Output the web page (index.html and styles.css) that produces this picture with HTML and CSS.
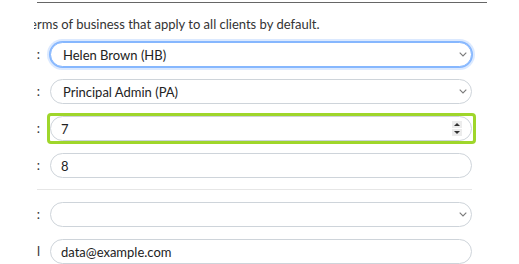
FILE: index.html
```html
<!DOCTYPE html>
<html lang="en">
<head>
  <meta charset="UTF-8" />
  <meta name="viewport" content="width=device-width, initial-scale=1.0" />
  <title>Client defaults</title>
  <link rel="stylesheet" href="styles.css">
</head>
<body>

  <div class="clip">
    <div class="sheet">
      <hr class="rule" />
      <p class="intro">Terms of business that apply to all clients by default.</p>

      <div class="form">
        <label class="lbl" for="partner"><span>Responsible partner:</span></label>
        <div class="control">
          <select id="partner" class="field select is-focused">
            <option>Helen Brown (HB)</option>
          </select>
          <svg class="chevron" width="8" height="5" viewBox="0 0 8 5"><polyline points="0.7,0.7 4,4 7.3,0.7" /></svg>
        </div>

        <label class="lbl" for="admin"><span>Billing admin:</span></label>
        <div class="control">
          <select id="admin" class="field select">
            <option>Principal Admin (PA)</option>
          </select>
          <svg class="chevron" width="8" height="5" viewBox="0 0 8 5"><polyline points="0.7,0.7 4,4 7.3,0.7" /></svg>
        </div>

        <label class="lbl" for="terms"><span>Payment terms (days):</span></label>
        <div class="control is-changed">
          <input id="terms" class="field" type="text" value="7" />
          <span class="spin">
            <span class="spin-up"></span>
            <span class="spin-down"></span>
          </span>
        </div>

        <label class="lbl" for="reminder"><span>Reminder after (days):</span></label>
        <div class="control">
          <input id="reminder" class="field" type="text" value="8" />
        </div>

        <hr class="divider" />

        <label class="lbl" for="currency"><span>Default currency:</span></label>
        <div class="control">
          <select id="currency" class="field select">
            <option></option>
          </select>
          <svg class="chevron" width="8" height="5" viewBox="0 0 8 5"><polyline points="0.7,0.7 4,4 7.3,0.7" /></svg>
        </div>

        <label class="lbl" for="dpemail"><span>Data protection email<br />address:</span></label>
        <div class="control">
          <input id="dpemail" class="field" type="text" value="data@example.com" />
        </div>
      </div>
    </div>
  </div>

</body>
</html>
```

FILE: styles.css
```css
body {
  margin: 0;
  background: #fff;
  font-family: Lato, "Open Sans", sans-serif;
  font-size: 13px;
  color: #333;
  overflow: hidden;
}

.clip {
  margin-left: 34px;
  width: 453px;
  height: 264px;
  overflow: hidden;
}

.rule {
  margin: 2px 0 0 3px;
  border: none;
  border-top: 1px solid #666;
}

.intro {
  margin: 13px 0 0 -10px;
  line-height: 17px;
  white-space: nowrap;
}

.form {
  display: grid;
  grid-template-columns: 3px 1fr;
  column-gap: 10px;
  row-gap: 12px;
  margin-top: 9px;
  padding: 0 15px 0 3px;
}

/* labels are cut at the left, only their tail shows */
.lbl {
  display: flex;
  justify-content: flex-end;
  overflow: hidden;
  line-height: 17px;
  padding-top: 4px;
  color: #333;
}

.lbl span {
  flex: none;
  white-space: nowrap;
  text-align: right;
}

.control {
  position: relative;
}

.field {
  display: block;
  box-sizing: border-box;
  width: 100%;
  height: 25px;
  margin: 0;
  padding: 0 24px 0 10px;
  border: 1px solid #ced4da;
  border-radius: 13px;
  background: #fff;
  font-family: inherit;
  font-size: 13px;
  color: #222;
  outline: none;
}

.select {
  appearance: none;
  -webkit-appearance: none;
  padding-left: 12px;
}

.is-focused {
  border-color: #86b7fe;
  box-shadow: 0 0 0 1px #86b7fe, 0 0 0 3px rgba(13, 110, 253, 0.15);
}

.chevron {
  position: absolute;
  right: 5px;
  top: 10px;
  fill: none;
  stroke: #7a7a7a;
  stroke-width: 1.1;
}

.is-changed::after {
  content: "";
  position: absolute;
  top: -3px;
  right: -4px;
  bottom: -3px;
  left: -3px;
  border: 3px solid #9fd62b;
  border-radius: 4px;
  pointer-events: none;
}

.spin {
  position: absolute;
  right: 10px;
  top: 5px;
  display: flex;
  flex-direction: column;
  gap: 1px;
}

.spin-up,
.spin-down {
  display: block;
  width: 10px;
  height: 7px;
  background: #ececec;
  position: relative;
}

.spin-up::before,
.spin-down::before {
  content: "";
  position: absolute;
  left: 2px;
  border-left: 3px solid transparent;
  border-right: 3px solid transparent;
}

.spin-up::before {
  top: 2px;
  border-bottom: 3px solid #333;
}

.spin-down::before {
  top: 2px;
  border-top: 3px solid #333;
}

.divider {
  grid-column: 1 / -1;
  margin: -1px 0 -1px 0;
  border: none;
  border-top: 1px solid #e6e6e6;
}
```
